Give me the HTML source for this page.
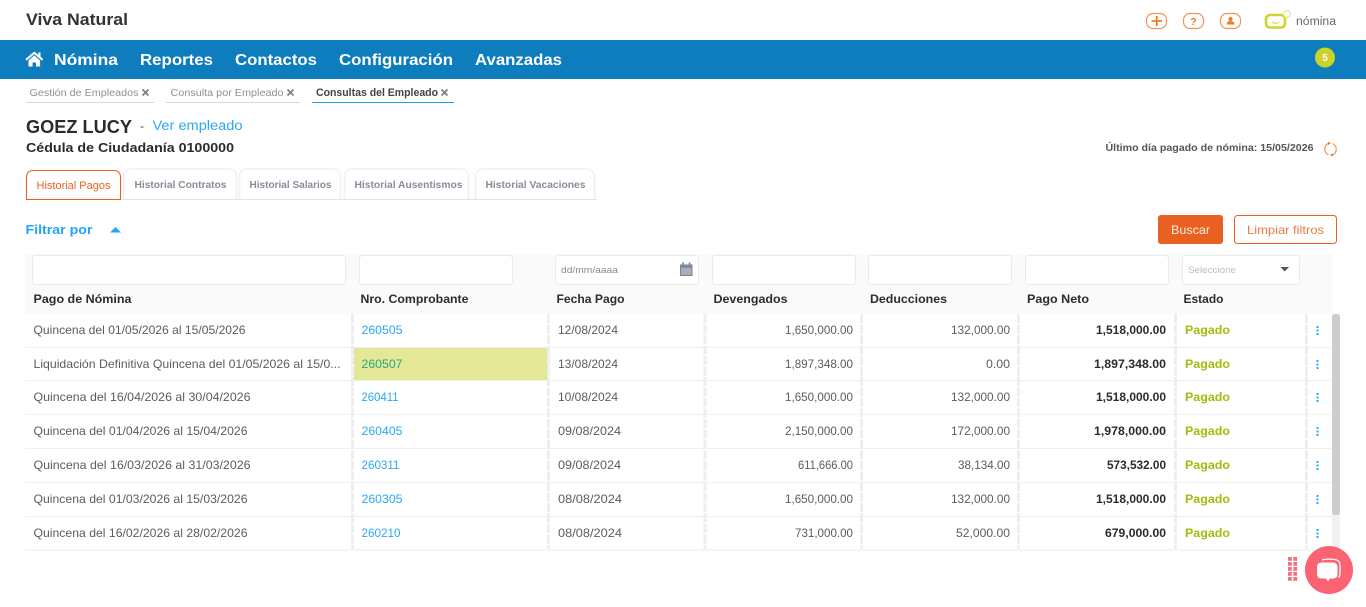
<!DOCTYPE html>
<html lang="es"><head><meta charset="utf-8"><title>Viva Natural</title>
<style>
html,body{margin:0;padding:0;background:#fff;width:1366px;height:607px;overflow:hidden}
svg{display:block}
text{font-family:"Liberation Sans",sans-serif;white-space:pre}
.c{font-size:12px;fill:#5c5c5c}
.n{font-size:12px;fill:#5c5c5c;text-anchor:end}
.b{font-size:12px;fill:#2b2b2b;font-weight:bold;text-anchor:end}
.g{font-size:12px;fill:#a0bd0a;font-weight:bold}
.l{font-size:12px;fill:#29a9f5}
.h{font-size:12px;fill:#2b2b33;font-weight:bold}
.nav{font-size:16px;fill:#fff;font-weight:bold}
.tab{font-size:10.5px;fill:#8a8d99;font-weight:bold}
.bc{font-size:10.5px;fill:#8e9099}
</style></head><body>
<svg width="1366" height="607" viewBox="0 0 1366 607" xmlns="http://www.w3.org/2000/svg">
<rect width="1366" height="607" fill="#fff"/>
<text x="26" y="25" font-size="16.500" font-weight="bold" fill="#333" textLength="102" lengthAdjust="spacingAndGlyphs">Viva Natural</text>
<g fill="none" stroke="#f2935a" stroke-width="1.200">
<rect x="1146.500" y="13.500" width="20" height="15" rx="6.500"/><rect x="1183.500" y="13.500" width="20" height="15" rx="6.500"/><rect x="1220.500" y="13.500" width="20" height="15" rx="6.500"/>
</g>
<path d="M1151.500 21h10.500M1156.750 16v10" stroke="#ee7a22" stroke-width="1.800"/>
<text x="1193.500" y="25" font-size="10.500" font-weight="bold" fill="#ee7a22" text-anchor="middle">?</text>
<circle cx="1230.500" cy="19" r="2" fill="#ee7a22"/><path d="M1226.500 24.500q0-3.500 4-3.500t4 3.500z" fill="#ee7a22"/>
<rect x="1266" y="15" width="19" height="12.500" rx="4" fill="#fff" stroke="#cdd42a" stroke-width="2.600"/>
<path d="M1271.500 22q4 2.500 8 0" fill="none" stroke="#cdd42a" stroke-width="1"/>
<circle cx="1287" cy="14" r="3.500" fill="#fff" stroke="#e4e89a" stroke-width="1.200"/>
<text x="1296" y="25" font-size="11.500" fill="#666" textLength="40" lengthAdjust="spacingAndGlyphs">nómina</text>

<rect y="40" width="1366" height="39" fill="#0d7dbd"/>
<path d="M26 59.800L34.300 52.800L42.600 59.800" fill="none" stroke="#fff" stroke-width="2"/>
<path d="M28.500 60.500L34.300 55.500L40.100 60.500V66.500H36V62.500H32.600V66.500H28.500Z" fill="#fff"/>
<rect x="38.300" y="52.500" width="2.200" height="4.500" fill="#fff"/>
<text class="nav" x="54" y="65" textLength="64" lengthAdjust="spacingAndGlyphs">Nómina</text>
<text class="nav" x="140" y="65" textLength="73" lengthAdjust="spacingAndGlyphs">Reportes</text>
<text class="nav" x="235" y="65" textLength="82" lengthAdjust="spacingAndGlyphs">Contactos</text>
<text class="nav" x="339" y="65" textLength="114" lengthAdjust="spacingAndGlyphs">Configuración</text>
<text class="nav" x="475" y="65" textLength="87" lengthAdjust="spacingAndGlyphs">Avanzadas</text>
<circle cx="1325" cy="57.500" r="10" fill="#cbd32a"/>
<text x="1325" y="61" font-size="10" font-weight="bold" fill="#fff" text-anchor="middle">5</text>

<text class="bc" x="29.500" y="96" textLength="109" lengthAdjust="spacingAndGlyphs">Gestión de Empleados</text>
<path d="M142.500 89.500l6 6M148.500 89.500l-6 6" stroke="#7d808a" stroke-width="1.800"/>
<rect x="26" y="102" width="128" height="1" fill="#d5d7dc"/>
<text class="bc" x="170.500" y="96" textLength="113" lengthAdjust="spacingAndGlyphs">Consulta por Empleado</text>
<path d="M287.500 89.500l6 6M293.500 89.500l-6 6" stroke="#7d808a" stroke-width="1.800"/>
<rect x="166" y="102" width="134" height="1" fill="#d5d7dc"/>
<text x="316" y="96" font-size="11" font-weight="bold" fill="#444" textLength="122" lengthAdjust="spacingAndGlyphs">Consultas del Empleado</text>
<path d="M441.500 89.500l6 6M447.500 89.500l-6 6" stroke="#7d808a" stroke-width="1.800"/>
<rect x="312" y="102" width="142" height="1" fill="#1e9fe8"/>

<text x="26" y="133" font-size="18" font-weight="bold" fill="#2b2b2b" textLength="106" lengthAdjust="spacingAndGlyphs">GOEZ LUCY</text>
<text x="140" y="130" font-size="12" fill="#444">-</text>
<text x="152.500" y="130" font-size="13.500" fill="#29a9f5" textLength="90" lengthAdjust="spacingAndGlyphs">Ver empleado</text>
<text x="26" y="152" font-size="13" font-weight="bold" fill="#2b2b2b" textLength="208" lengthAdjust="spacingAndGlyphs">Cédula de Ciudadanía 0100000</text>
<text x="1105.500" y="151" font-size="10.500" font-weight="bold" fill="#555" textLength="208" lengthAdjust="spacingAndGlyphs">Último día pagado de nómina: 15/05/2026</text>
<path d="M1332.500 143.500A6.300 6.300 0 0 1 1332.500 155M1328.500 154.800A6.300 6.300 0 0 1 1328.500 143.300" fill="none" stroke="#f2934f" stroke-width="1.200"/>
<path d="M1328 141.800l3 1.500-3 1.700zM1333 156.500l-3-1.500 3-1.700z" fill="#ee7a22"/>

<path d="M122 199.500h475" stroke="#e2e3e6" fill="none"/>
<g fill="#fff" stroke="#f1f1f3" stroke-width="1.600">
<path d="M123.500 199v-22q0-8 8-8h97q8 0 8 8v22"/>
<path d="M239.500 199v-22q0-8 8-8h85q8 0 8 8v22"/>
<path d="M344.500 199v-22q0-8 8-8h108q8 0 8 8v22"/>
<path d="M475.500 199v-22q0-8 8-8h103q8 0 8 8v22"/>
</g>
<path d="M26.500 199.500v-22q0-7 7-7h80q7 0 7 7v22z" fill="#fff" stroke="#e96122" stroke-width="1.100"/>
<text x="36.500" y="189" font-size="11" fill="#e96122" textLength="74" lengthAdjust="spacingAndGlyphs">Historial Pagos</text>
<text class="tab" x="134.500" y="188" textLength="92" lengthAdjust="spacingAndGlyphs">Historial Contratos</text>
<text class="tab" x="249.500" y="188" textLength="82" lengthAdjust="spacingAndGlyphs">Historial Salarios</text>
<text class="tab" x="354.500" y="188" textLength="108" lengthAdjust="spacingAndGlyphs">Historial Ausentismos</text>
<text class="tab" x="485.500" y="188" textLength="100" lengthAdjust="spacingAndGlyphs">Historial Vacaciones</text>

<text x="25.500" y="234" font-size="13" font-weight="bold" fill="#1ea7fa" textLength="67" lengthAdjust="spacingAndGlyphs">Filtrar por</text>
<path d="M110 232.500l5.500-5.500 5.500 5.500z" fill="#1ea7fa"/>
<rect x="1158" y="215" width="65" height="29" rx="3" fill="#e96122"/>
<text x="1190.500" y="234" font-size="12" fill="#fdeee6" text-anchor="middle" textLength="39" lengthAdjust="spacingAndGlyphs">Buscar</text>
<rect x="1234.500" y="215.500" width="102" height="28" rx="3" fill="#fff" stroke="#e96122"/>
<text x="1247" y="234" font-size="12" fill="#ec7a45" textLength="77" lengthAdjust="spacingAndGlyphs">Limpiar filtros</text>

<rect x="25" y="254" width="1307" height="60" fill="#fafafa"/>
<g fill="#fff" stroke="#ebebed">
<rect x="32.500" y="255.500" width="313" height="29" rx="3"/>
<rect x="359.500" y="255.500" width="153" height="29" rx="3"/>
<rect x="555.500" y="255.500" width="143" height="29" rx="3"/>
<rect x="712.500" y="255.500" width="143" height="29" rx="3"/>
<rect x="868.500" y="255.500" width="143" height="29" rx="3"/>
<rect x="1025.500" y="255.500" width="143" height="29" rx="3"/>
<rect x="1182.500" y="255.500" width="117" height="29" rx="3"/>
</g>
<text x="561" y="273" font-size="9.500" fill="#8a8a8a" textLength="57" lengthAdjust="spacingAndGlyphs">dd/mm/aaaa</text>
<path d="M680 264.500h12.500v11.500h-12.500z" fill="#7f8897"/><rect x="682" y="262.500" width="1.800" height="3" fill="#7f8897"/><rect x="688.700" y="262.500" width="1.800" height="3" fill="#7f8897"/>
<rect x="681.200" y="267.800" width="10" height="7" fill="#aab0ba"/>
<text x="1188" y="273" font-size="9.500" fill="#bdbdbd" textLength="48" lengthAdjust="spacingAndGlyphs">Seleccione</text>
<path d="M1280.500 267h8.500l-4.250 4.500z" fill="#555"/>

<text class="h" x="33.500" y="303" textLength="98" lengthAdjust="spacingAndGlyphs">Pago de Nómina</text>
<text class="h" x="360.500" y="303" textLength="108" lengthAdjust="spacingAndGlyphs">Nro. Comprobante</text>
<text class="h" x="556.500" y="303" textLength="68" lengthAdjust="spacingAndGlyphs">Fecha Pago</text>
<text class="h" x="713.500" y="303" textLength="74" lengthAdjust="spacingAndGlyphs">Devengados</text>
<text class="h" x="870" y="303" textLength="77" lengthAdjust="spacingAndGlyphs">Deducciones</text>
<text class="h" x="1027" y="303" textLength="62" lengthAdjust="spacingAndGlyphs">Pago Neto</text>
<text class="h" x="1183.500" y="303" textLength="40" lengthAdjust="spacingAndGlyphs">Estado</text>

<rect x="25" y="314" width="1307" height="235" fill="#fff"/>
<rect x="25" y="549" width="1307" height="2" fill="#f5f5f5"/>
<rect x="354" y="347" width="194" height="33" fill="#e3e896"/>
<g fill="#f0f0f0">
<rect x="25" y="347" width="1307" height="1"/><rect x="25" y="380" width="1307" height="1"/><rect x="25" y="414" width="1307" height="1"/><rect x="25" y="448" width="1307" height="1"/><rect x="25" y="482" width="1307" height="1"/><rect x="25" y="516" width="1307" height="1"/>
</g>
<g stroke="#eeeeee" stroke-width="3" stroke-dasharray="9 1.500" fill="none">
<path d="M352.500 314V549M548.500 314V549M705 314V549M861.500 314V549M1018.500 314V549M1175.500 314V549M1306.500 314V549"/>
</g>
<rect x="1332" y="314" width="8" height="235" fill="#f0f0f0"/>
<rect x="1332" y="314" width="8" height="201" rx="3" fill="#cdcdcd"/>

<text class="c" x="33.500" y="334" textLength="212" lengthAdjust="spacingAndGlyphs">Quincena del 01/05/2026 al 15/05/2026</text>
<text class="c" x="33.500" y="368" textLength="307" lengthAdjust="spacingAndGlyphs">Liquidación Definitiva Quincena del 01/05/2026 al 15/0...</text>
<text class="c" x="33.500" y="401" textLength="217" lengthAdjust="spacingAndGlyphs">Quincena del 16/04/2026 al 30/04/2026</text>
<text class="c" x="33.500" y="435" textLength="214" lengthAdjust="spacingAndGlyphs">Quincena del 01/04/2026 al 15/04/2026</text>
<text class="c" x="33.500" y="469" textLength="217" lengthAdjust="spacingAndGlyphs">Quincena del 16/03/2026 al 31/03/2026</text>
<text class="c" x="33.500" y="503" textLength="214" lengthAdjust="spacingAndGlyphs">Quincena del 01/03/2026 al 15/03/2026</text>
<text class="c" x="33.500" y="537" textLength="214" lengthAdjust="spacingAndGlyphs">Quincena del 16/02/2026 al 28/02/2026</text>

<text class="l" x="361.500" y="334" textLength="41" lengthAdjust="spacingAndGlyphs">260505</text>
<text class="l" x="361.500" y="368" textLength="41" lengthAdjust="spacingAndGlyphs" style="fill:#2ba58a">260507</text>
<text class="l" x="361.500" y="401" textLength="37" lengthAdjust="spacingAndGlyphs">260411</text>
<text class="l" x="361.500" y="435" textLength="41" lengthAdjust="spacingAndGlyphs">260405</text>
<text class="l" x="361.500" y="469" textLength="38" lengthAdjust="spacingAndGlyphs">260311</text>
<text class="l" x="361.500" y="503" textLength="41" lengthAdjust="spacingAndGlyphs">260305</text>
<text class="l" x="361.500" y="537" textLength="39" lengthAdjust="spacingAndGlyphs">260210</text>

<text class="c" x="558" y="334" textLength="60" lengthAdjust="spacingAndGlyphs">12/08/2024</text>
<text class="c" x="558" y="368" textLength="60" lengthAdjust="spacingAndGlyphs">13/08/2024</text>
<text class="c" x="558" y="401" textLength="60" lengthAdjust="spacingAndGlyphs">10/08/2024</text>
<text class="c" x="558" y="435" textLength="63" lengthAdjust="spacingAndGlyphs">09/08/2024</text>
<text class="c" x="558" y="469" textLength="63" lengthAdjust="spacingAndGlyphs">09/08/2024</text>
<text class="c" x="558" y="503" textLength="64" lengthAdjust="spacingAndGlyphs">08/08/2024</text>
<text class="c" x="558" y="537" textLength="64" lengthAdjust="spacingAndGlyphs">08/08/2024</text>

<text class="n" x="853" y="334" textLength="68" lengthAdjust="spacingAndGlyphs">1,650,000.00</text>
<text class="n" x="853" y="368" textLength="68" lengthAdjust="spacingAndGlyphs">1,897,348.00</text>
<text class="n" x="853" y="401" textLength="68" lengthAdjust="spacingAndGlyphs">1,650,000.00</text>
<text class="n" x="853" y="435" textLength="68" lengthAdjust="spacingAndGlyphs">2,150,000.00</text>
<text class="n" x="853" y="469" textLength="55" lengthAdjust="spacingAndGlyphs">611,666.00</text>
<text class="n" x="853" y="503" textLength="68" lengthAdjust="spacingAndGlyphs">1,650,000.00</text>
<text class="n" x="853" y="537" textLength="58" lengthAdjust="spacingAndGlyphs">731,000.00</text>

<text class="n" x="1010" y="334" textLength="59" lengthAdjust="spacingAndGlyphs">132,000.00</text>
<text class="n" x="1010" y="368" textLength="24" lengthAdjust="spacingAndGlyphs">0.00</text>
<text class="n" x="1010" y="401" textLength="59" lengthAdjust="spacingAndGlyphs">132,000.00</text>
<text class="n" x="1010" y="435" textLength="59" lengthAdjust="spacingAndGlyphs">172,000.00</text>
<text class="n" x="1010" y="469" textLength="52" lengthAdjust="spacingAndGlyphs">38,134.00</text>
<text class="n" x="1010" y="503" textLength="59" lengthAdjust="spacingAndGlyphs">132,000.00</text>
<text class="n" x="1010" y="537" textLength="54" lengthAdjust="spacingAndGlyphs">52,000.00</text>

<text class="b" x="1166" y="334" textLength="70" lengthAdjust="spacingAndGlyphs">1,518,000.00</text>
<text class="b" x="1166" y="368" textLength="72" lengthAdjust="spacingAndGlyphs">1,897,348.00</text>
<text class="b" x="1166" y="401" textLength="70" lengthAdjust="spacingAndGlyphs">1,518,000.00</text>
<text class="b" x="1166" y="435" textLength="72" lengthAdjust="spacingAndGlyphs">1,978,000.00</text>
<text class="b" x="1166" y="469" textLength="59" lengthAdjust="spacingAndGlyphs">573,532.00</text>
<text class="b" x="1166" y="503" textLength="70" lengthAdjust="spacingAndGlyphs">1,518,000.00</text>
<text class="b" x="1166" y="537" textLength="61" lengthAdjust="spacingAndGlyphs">679,000.00</text>

<text class="g" x="1185" y="334" textLength="45" lengthAdjust="spacingAndGlyphs">Pagado</text>
<text class="g" x="1185" y="368" textLength="45" lengthAdjust="spacingAndGlyphs">Pagado</text>
<text class="g" x="1185" y="401" textLength="45" lengthAdjust="spacingAndGlyphs">Pagado</text>
<text class="g" x="1185" y="435" textLength="45" lengthAdjust="spacingAndGlyphs">Pagado</text>
<text class="g" x="1185" y="469" textLength="45" lengthAdjust="spacingAndGlyphs">Pagado</text>
<text class="g" x="1185" y="503" textLength="45" lengthAdjust="spacingAndGlyphs">Pagado</text>
<text class="g" x="1185" y="537" textLength="45" lengthAdjust="spacingAndGlyphs">Pagado</text>

<g stroke="#29a9f5" stroke-width="2" stroke-dasharray="2 1.500" fill="none">
<path d="M1317.500 326v9M1317.500 360v9M1317.500 393v9M1317.500 427v9M1317.500 461v9M1317.500 495v9M1317.500 529v9"/>
</g>

<g fill="#f4707d">
<rect x="1288" y="557" width="3.800" height="3.800"/><rect x="1293.300" y="557" width="3.800" height="3.800"/>
<rect x="1288" y="562" width="3.800" height="3.800"/><rect x="1293.300" y="562" width="3.800" height="3.800"/>
<rect x="1288" y="567" width="3.800" height="3.800"/><rect x="1293.300" y="567" width="3.800" height="3.800"/>
<rect x="1288" y="572" width="3.800" height="3.800"/><rect x="1293.300" y="572" width="3.800" height="3.800"/>
<rect x="1288" y="577" width="3.800" height="3.800"/><rect x="1293.300" y="577" width="3.800" height="3.800"/>
</g>
<circle cx="1329" cy="570" r="24" fill="#fb6272"/>
<path d="M1322 559.800q7-1.200 13-.300q5 .8 5 5.500v8q0 3-1.500 4.500" fill="none" stroke="#fff" stroke-width="1.300"/>
<path d="M1321.500 562.500h11q5 0 5 4.500v7q0 4.500-5 4.500h-2.500l-2 3-2-3h-4.500q-4.500 0-4.500-4.500v-7q0-4.500 4.500-4.500z" fill="#fff"/>
</svg>
</body></html>
